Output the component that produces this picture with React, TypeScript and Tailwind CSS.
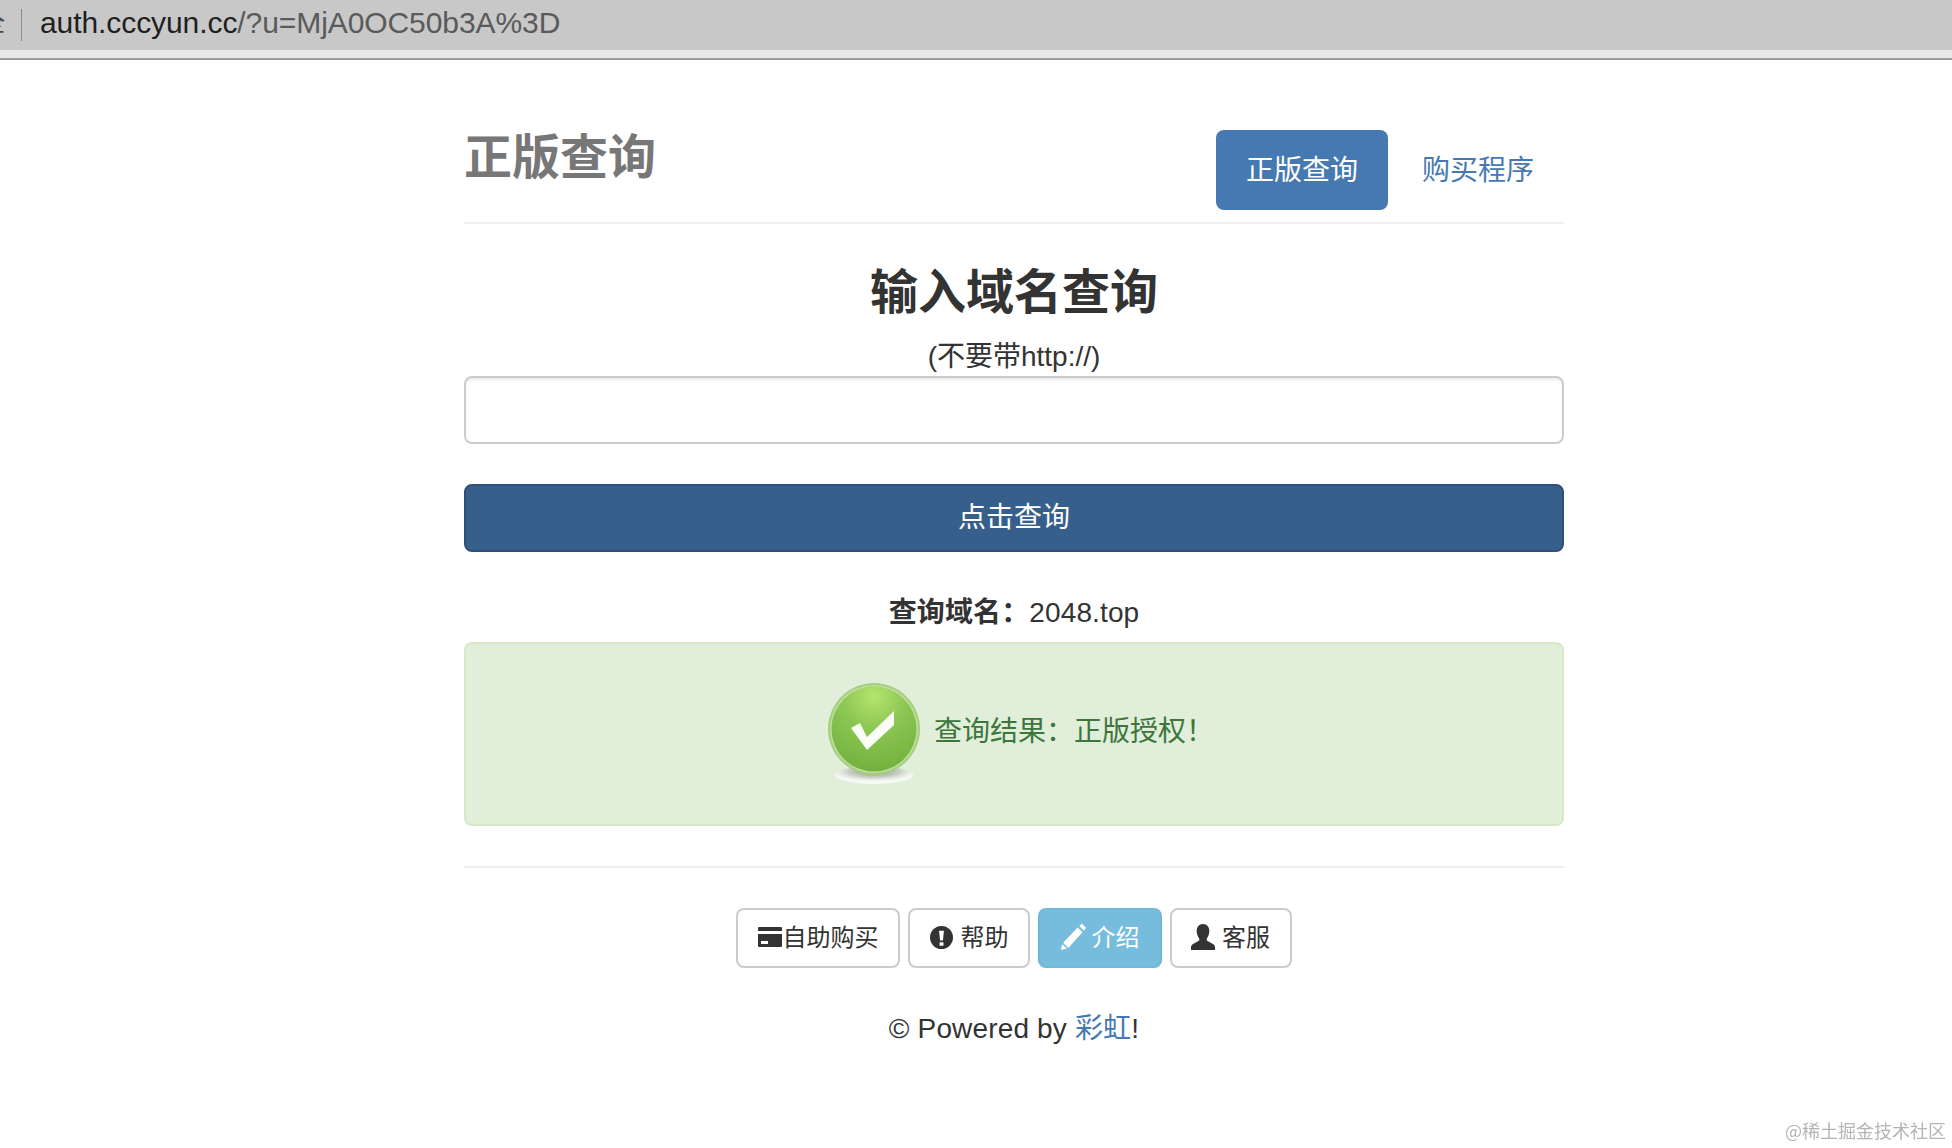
import React from "react";

const font = { fontFamily: '"Liberation Sans","Noto Sans CJK SC",sans-serif' };

function CheckBadge() {
  return (
    <svg width="100" height="104" viewBox="0 0 100 104" className="shrink-0">
      <defs>
        <radialGradient id="g" cx="50%" cy="12%" r="85%">
          <stop offset="0%" stopColor="#b4e46e" />
          <stop offset="45%" stopColor="#8cc653" />
          <stop offset="100%" stopColor="#74b23e" />
        </radialGradient>
        <radialGradient id="s" cx="50%" cy="30%" r="55%">
          <stop offset="0%" stopColor="#8c9488" />
          <stop offset="60%" stopColor="#c8cfc4" />
          <stop offset="100%" stopColor="#ffffff" stopOpacity="0.7" />
        </radialGradient>
      </defs>
      <ellipse cx="50" cy="93" rx="39" ry="9" fill="url(#s)" />
      <circle cx="50" cy="47" r="46" fill="#a5cf7c" />
      <circle cx="50" cy="47" r="44" fill="#d5e8c0" opacity="0.55" />
      <circle cx="50" cy="47" r="42.500" fill="url(#g)" />
      <path d="M27 46 L36 41 L43 55 L70 29 L70 43 L43 68 Z" fill="#fbfdf7" />
    </svg>
  );
}

function CardIcon() {
  return (
    <svg width="24" height="20" viewBox="0 0 24 20" className="shrink-0 -mt-[2px]">
      <path fill="currentColor" fillRule="evenodd" d="M1 0h22a1 1 0 0 1 1 1v3H0V1a1 1 0 0 1 1-1zM0 7h24v12a1 1 0 0 1-1 1H1a1 1 0 0 1-1-1zM3 14v3h7v-3z" />
    </svg>
  );
}
function AlertIcon() {
  return (
    <svg width="23" height="23" viewBox="0 0 24 24" className="shrink-0 -mt-[2px]">
      <path fill="currentColor" fillRule="evenodd" d="M12 0a12 12 0 1 1 0 24a12 12 0 0 1 0-24zM9.500 5l1 10h3l1-10zM10 17v3.500h4V17z" />
    </svg>
  );
}
function PencilIcon() {
  return (
    <svg width="25" height="27" viewBox="0 0 24 26" className="shrink-0 -mt-[3px]">
      <path fill="currentColor" d="M20 0.500l4 4-1.800 3-4.700-4.700zM16 4.300l4.700 4.700L7 24 2 19zM1 20.500l4.700 4L0 26z" />
    </svg>
  );
}
function UserIcon() {
  return (
    <svg width="24" height="28" viewBox="0 0 24 28" className="shrink-0 -mt-[2px] -ml-[1px] mr-[1px]">
      <path fill="currentColor" d="M12 1c4 0 6.300 3 6.300 7 0 3-1 5.500-2.300 7.200-.6.900-.5 2.300.5 2.900l5.500 3c1.300.8 2 1.900 2 3.400V27H0v-2.500c0-1.500.7-2.600 2-3.400l5.500-3c1-.6 1.100-2 .5-2.900C6.700 13.500 5.700 11 5.700 8c0-4 2.300-7 6.300-7z" />
    </svg>
  );
}

export default function App() {
  return (
    <div style={font} className="min-h-[1148px] bg-white text-[#333] overflow-hidden">
      <div className="h-[50px] bg-[#c8c8c8] flex items-center text-[30px] leading-none pb-[5px] tracking-[-0.08px]">
        <span className="w-[5px] overflow-hidden text-[#444] text-[24px] flex justify-end"><span className="shrink-0">全</span></span>
        <div className="w-px h-[32px] bg-[#8c8c8c] ml-[16px] mr-[18px] mt-[5px]" />
        <span className="text-[#1f1f1f]">auth.cccyun.cc</span>
        <span className="text-[#5a5a5a]">/?u=MjA0OC50b3A%3D</span>
      </div>
      <div className="h-[8px] bg-[#e8e8e8]" />
      <div className="h-[2px] bg-[#9c9c9c]" />

      <div className="w-[1100px] ml-[464px] pt-[70px]">
        <header className="flex justify-between items-start h-[94px] border-b-2 border-[#eeeeee]">
          <h3 className="text-[48px] font-bold text-[#777] leading-[52px] mt-[2px]">正版查询</h3>
          <nav className="flex text-[28px] w-[348px]">
            <a className="w-[172px] h-[80px] pt-[1px] rounded-lg bg-[#4679b2] text-white flex items-center justify-center">正版查询</a>
            <a className="w-[176px] h-[80px] pt-[1px] pl-[4px] text-[#4679b2] flex items-center justify-center">购买程序</a>
          </nav>
        </header>

        <h2 className="text-[48px] font-bold text-center leading-[52px] mt-[43px]">输入域名查询</h2>
        <p className="text-[28px] text-center leading-[38px] mt-[19px]">(不要带http://)</p>
        <input
          className="block w-full h-[68px] rounded-lg border-2 border-[#cccccc] bg-white shadow-[inset_0_2px_2px_rgba(0,0,0,0.075)] outline-none"
          readOnly
        />
        <button className="block w-full h-[68px] mt-[40px] rounded-lg border-2 border-[#2e5077] bg-[#375f8b] text-white text-[28px]">
          点击查询
        </button>

        <p className="text-[28px] text-center leading-[40px] mt-[41px] tracking-[0.12px]">
          <b>查询域名：</b>2048.top
        </p>
        <div className="mt-[9px] h-[184px] pl-[10px] rounded-lg border-2 border-[#d6e9c6] bg-[#e1efda] flex items-center justify-center text-[#3c763d] text-[28px]">
          <CheckBadge />
          <span className="ml-[10px] mb-[4px]">查询结果：正版授权！</span>
        </div>

        <div className="h-[2px] bg-[#eeeeee] mt-[40px]" />

        <div className="mt-[40px] flex justify-center gap-[8px] text-[24px]">
          <button className="w-[164px] h-[60px] rounded-lg border-2 border-[#cccccc] bg-white flex items-center justify-center">
            <CardIcon />
            <span className="ml-[1px]">自助购买</span>
          </button>
          <button className="w-[122px] h-[60px] rounded-lg border-2 border-[#cccccc] bg-white flex items-center justify-center">
            <AlertIcon />
            <span className="ml-[8px]">帮助</span>
          </button>
          <button className="w-[124px] h-[60px] rounded-lg border-2 border-[#6fb8d8] bg-[#76bcdc] text-white flex items-center justify-center">
            <PencilIcon />
            <span className="ml-[6px]">介绍</span>
          </button>
          <button className="w-[122px] h-[60px] rounded-lg border-2 border-[#cccccc] bg-white flex items-center justify-center">
            <UserIcon />
            <span className="ml-[6px]">客服</span>
          </button>
        </div>

        <p className="text-[28px] text-center leading-[40px] mt-[41px] tracking-[0.15px]">
          © Powered by <a className="text-[#4679b2]">彩虹</a>!
        </p>
      </div>

      <div className="fixed right-[6px] bottom-[6px] text-[18px] leading-[24px] text-[#b4b4b4]" style={{ fontFamily: '"Noto Sans CJK SC",serif' }}>
        @稀土掘金技术社区
      </div>
    </div>
  );
}
